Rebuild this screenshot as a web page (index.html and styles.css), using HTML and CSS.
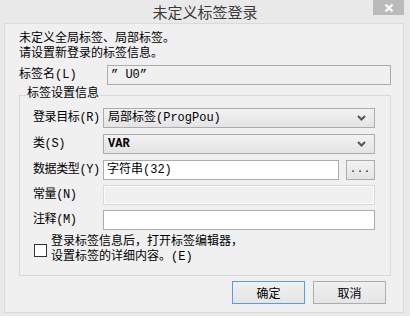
FILE: index.html
```html
<!DOCTYPE html>
<html lang="zh-CN">
<head>
  <meta charset="UTF-8">
  <title>未定义标签登录</title>
  <link rel="stylesheet" href="styles.css">
</head>
<body>

  <div class="titlebar">
    <span></span>
    <span class="title">未定义标签登录</span>
    <button class="close-btn">
      <svg width="10" height="10" viewBox="0 0 10 10">
        <path d="M1.5 1.5 L8.5 8.5 M8.5 1.5 L1.5 8.5" stroke="#fff" stroke-width="2.2" fill="none"/>
      </svg>
    </button>
  </div>

  <div class="panel">
    <p class="intro mono">未定义全局标签、局部标签。<br>请设置新登录的标签信息。</p>

    <div class="name-row">
      <label class="mono">标签名(L)</label>
      <div class="field readonly mono">” U0”</div>
    </div>

    <fieldset class="group">
      <legend>标签设置信息</legend>

      <div class="rows">
        <label class="mono">登录目标(R)</label>
        <div class="combo">
          <span class="mono">局部标签(ProgPou)</span>
          <svg width="9" height="6" viewBox="0 0 9 6">
            <path d="M1 1 L4.5 4.5 L8 1" stroke="#555" stroke-width="2" fill="none"/>
          </svg>
        </div>

        <label class="mono">类(S)</label>
        <div class="combo">
          <span class="mono bold">VAR</span>
          <svg width="9" height="6" viewBox="0 0 9 6">
            <path d="M1 1 L4.5 4.5 L8 1" stroke="#555" stroke-width="2" fill="none"/>
          </svg>
        </div>

        <label class="mono">数据类型(Y)</label>
        <div class="with-btn">
          <div class="field mono">字符串(32)</div>
          <button class="browse mono">...</button>
        </div>

        <label class="mono">常量(N)</label>
        <div class="field disabled"></div>

        <label class="mono">注释(M)</label>
        <div class="field"></div>
      </div>

      <div class="check-row">
        <span class="checkbox"></span>
        <span class="mono check-text">登录标签信息后，打开标签编辑器，<br>设置标签的详细内容。(E)</span>
      </div>
    </fieldset>

    <div class="actions">
      <button class="btn default">确定</button>
      <button class="btn">取消</button>
    </div>
  </div>

</body>
</html>
```

FILE: styles.css
```css
body {
  margin: 0;
  width: 410px;
  height: 316px;
  overflow: hidden;
  background: #e9e9e9;
  font-family: "Noto Sans CJK SC", sans-serif;
  font-size: 12px;
  color: #000;
}
.mono {
  font-family: "Liberation Mono", "Noto Sans CJK SC", monospace;
}
.bold {
  font-weight: bold;
}

.titlebar {
  height: 23px;
  display: grid;
  grid-template-columns: 1fr auto 1fr;
  align-items: start;
}
.title {
  font-size: 15px;
  line-height: 23px;
  color: #3a3a3a;
}
.close-btn {
  justify-self: end;
  margin-right: 6px;
  width: 31px;
  height: 15px;
  border: none;
  padding: 0;
  background: #bababa;
  display: flex;
  align-items: center;
  justify-content: center;
}

.panel {
  margin-left: 4px;
  width: 400px;
  height: 290px;
  box-sizing: border-box;
  border: 1px solid #dadada;
  background: #f0f0f0;
  display: flex;
  flex-direction: column;
}
.intro {
  margin: 0;
  padding: 8px 0 0 14px;
  line-height: 15px;
}

.name-row {
  display: grid;
  grid-template-columns: 88px 284px;
  align-items: center;
  margin: 3px 0 0 14px;
  line-height: 14px;
}

.field {
  height: 20px;
  box-sizing: border-box;
  border: 1px solid #acacac;
  background: #fff;
  padding: 0 3px;
  line-height: 18px;
  white-space: nowrap;
}
.field.readonly {
  background: #f0f0f0;
}
.field.disabled {
  background: #f0f0f0;
  border-color: #d9d9d9;
  box-shadow: inset 0 0 0 1px #fafafa;
}

.group {
  margin: 0 0 0 14px;
  width: 372px;
  box-sizing: border-box;
  border: 1px solid #d8d8d8;
  padding: 0 0 10px 0;
}
.group legend {
  margin-left: 6px;
  padding: 0 1px 6px 1px;
  line-height: 14px;
}

.rows {
  display: grid;
  grid-template-columns: 70px 272px;
  grid-template-rows: 21px 21px 20px 20px 20px;
  row-gap: 5px;
  align-items: start;
  padding: 3px 0 0 13px;
  line-height: 14px;
}
.rows label {
  margin-top: 3px;
  white-space: nowrap;
  letter-spacing: -0.4px;
}

.combo {
  height: 20px;
  box-sizing: border-box;
  border: 1px solid #acacac;
  background: linear-gradient(#f2f2f2, #e4e4e4);
  padding: 0 8px 0 4px;
  display: flex;
  align-items: center;
  justify-content: space-between;
}

.with-btn {
  display: flex;
  gap: 7px;
  align-items: center;
}
.with-btn .field {
  flex: 1;
}
.browse {
  width: 29px;
  height: 20px;
  margin-top: -1px;
  border: 1px solid #acacac;
  background: linear-gradient(#f2f2f2, #e4e4e4);
  font-size: 10px;
  letter-spacing: 1px;
  padding: 0;
}

.check-row {
  display: flex;
  align-items: center;
  gap: 4px;
  margin: 5px 0 0 14px;
}
.checkbox {
  width: 13px;
  height: 13px;
  box-sizing: border-box;
  border: 1px solid #333;
  background: #fff;
}
.check-text {
  line-height: 15px;
}

.actions {
  display: flex;
  justify-content: flex-end;
  gap: 8px;
  padding: 5px 17px 0 0;
}
.btn {
  width: 73px;
  height: 23px;
  border: 1px solid #adadad;
  background: linear-gradient(#f0f0f0, #e5e5e5);
  font-family: "Noto Sans CJK SC", sans-serif;
  font-size: 12px;
  padding: 0;
}
.btn.default {
  border-color: #569de5;
}
```
